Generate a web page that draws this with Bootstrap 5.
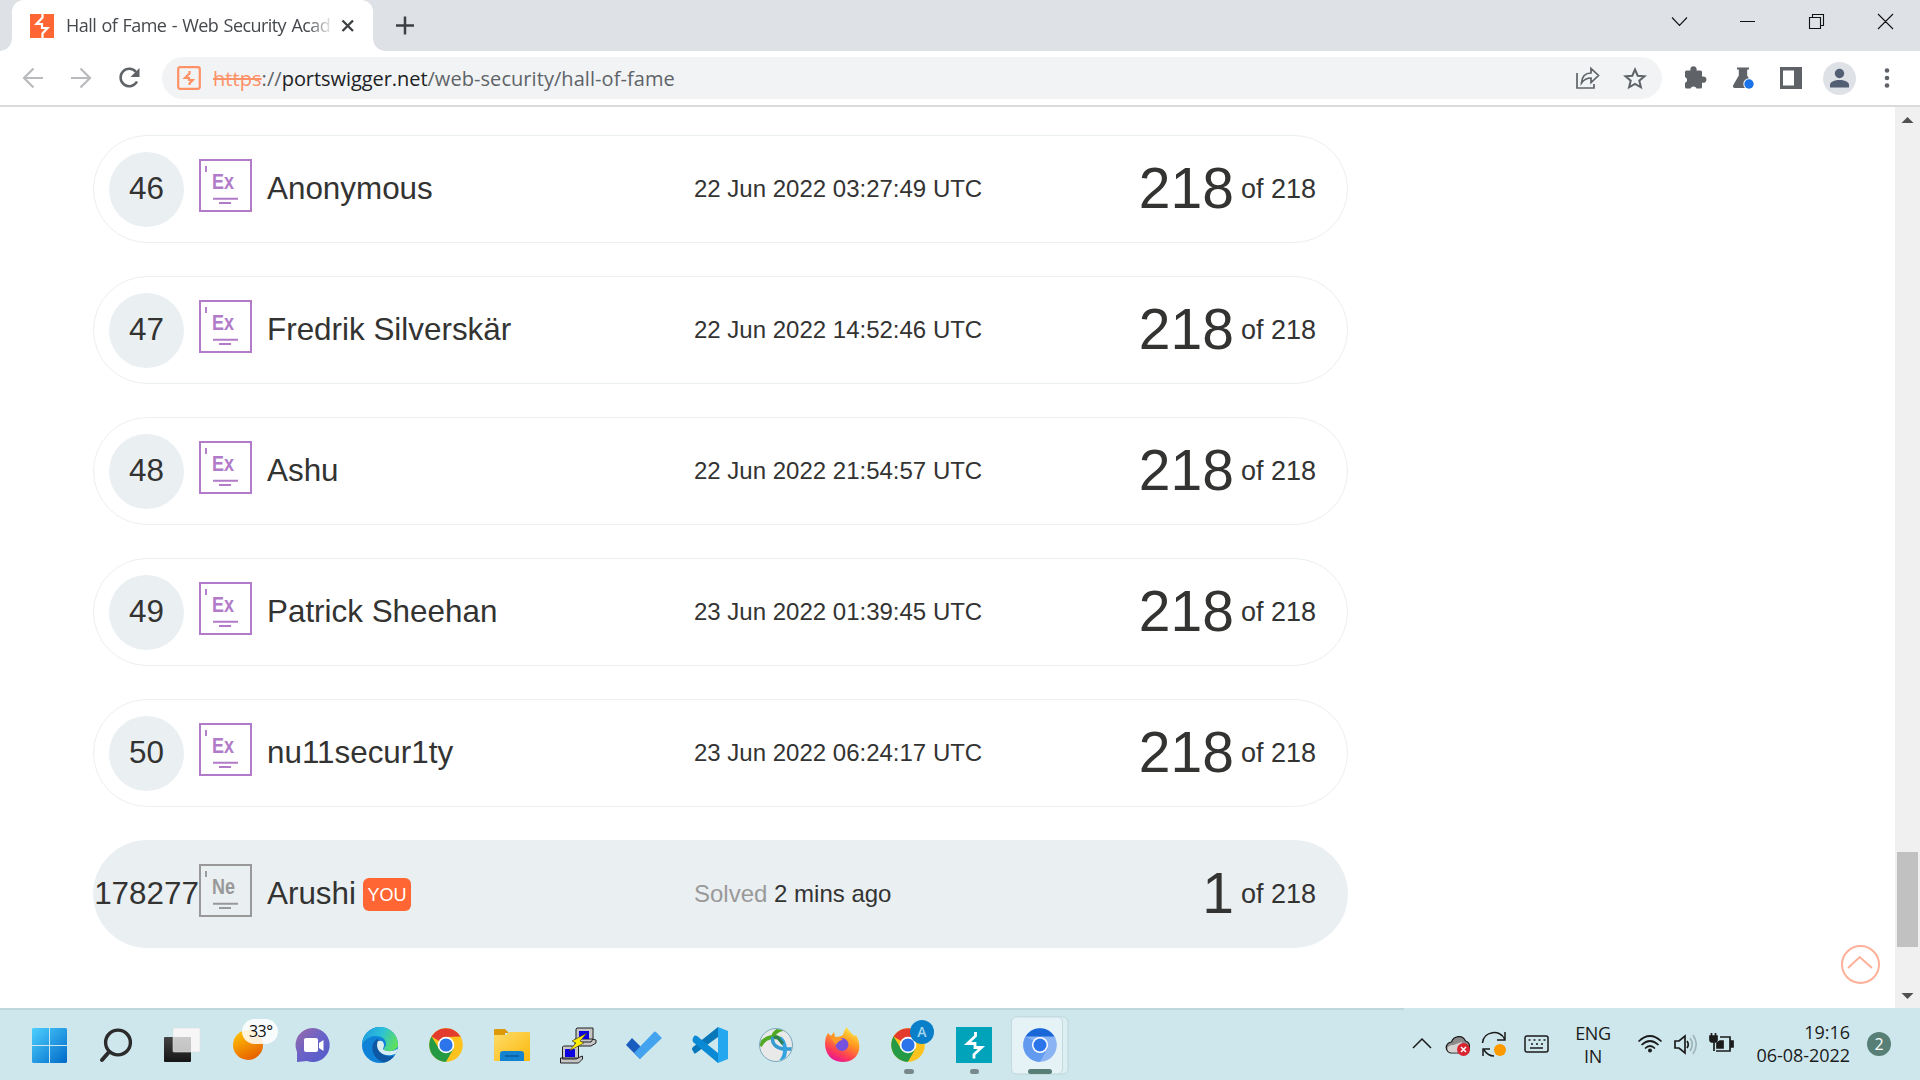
<!DOCTYPE html>
<html lang="en">
<head>
<meta charset="utf-8">
<title>Hall of Fame - Web Security Academy</title>
<link href="https://cdn.jsdelivr.net/npm/bootstrap@5.3.0/dist/css/bootstrap.min.css" rel="stylesheet">
<style>
body{width:1920px;height:1080px;overflow:hidden;background:#fff;font-family:"Liberation Sans",Arial,sans-serif;color:#333332}
svg{display:block;flex:none}
.ui-font{font-family:"Open Sans","Noto Sans",sans-serif}
.tabstrip{height:51px;background:#dee1e6}
.tab-active{width:361px;height:51px;margin-left:12px;background:#fff;border-radius:12px 12px 0 0;padding-left:18px;position:relative}
.tab-active::before,.tab-active::after{content:"";position:absolute;bottom:0;width:12px;height:12px}
.tab-active::before{left:-12px;background:radial-gradient(circle at 0 0,transparent 11.5px,#fff 12px)}
.tab-active::after{right:-12px;background:radial-gradient(circle at 100% 0,transparent 11.5px,#fff 12px)}
.tab-title{width:268px;margin-left:12px;margin-right:6px;font-size:18px;letter-spacing:-.56px;word-spacing:1.2px;color:#45484c;-webkit-mask-image:linear-gradient(90deg,#000 90%,rgba(0,0,0,.1) 99%)}
.toolbar{height:56px;border-bottom:2px solid #d9dadc;padding-left:9px}
.omnibox{width:1500px;height:42px;border-radius:21px;background:#f1f3f4;margin-left:12px;padding-left:15px}
.url{margin-left:12px;padding-top:1px;font-size:20px;letter-spacing:.06px;color:#5f6368}
.url .scheme{color:#ff9166;text-decoration:line-through}
.url .host{color:#202124;letter-spacing:-.06px}
.viewport{height:901px}
.board{width:1255px;margin:28px 0 0 93px;gap:33px}
.entry{height:108px;border:1px solid #eaeff1;border-radius:54px;font-size:31.4px;line-height:1;padding:0 31px 0 15px}
.entry.me{background:#eaeff2}
.rank{width:75px;height:75px;padding-bottom:2px;margin-top:1px;background:#eaeff2}
.level{margin:-7px 15px 0 15px}
.who{width:427px;padding-bottom:1px}
.when{font-size:24px;padding-bottom:1px}
.score{font-size:57px;padding-bottom:2px}
.score small{font-size:27px;margin-left:7px;padding-top:2px}
.you{background:#f63;color:#fff;font-size:18px;width:48px;height:33px;border-radius:6px;margin:2px 0 0 7px}
.scroller{width:25px;background:#f0f0f0}
.thumb{width:21px;height:95px;margin-top:728px;background:#c1c1c1}
.to-top{margin:838px 15px 0 0}
.taskbar{height:72px;background:#cee7ec;padding-left:17px;color:#1b1b1b;position:relative}
.taskbar::before{content:"";position:absolute;left:0;top:0;width:1404px;height:2px;background:#bed7dc}
.lang{width:72px;padding-top:1px;font-size:18px;line-height:23px;letter-spacing:-.4px}
.clock{width:107px;font-size:18px;line-height:23px;letter-spacing:-.05px}
.notif{width:24px;height:24px;background:#577f76;color:#fff;font-size:16px;margin:0 29px 0 17px}
</style>
</head>
<body class="d-flex flex-column">
<svg width="0" height="0" class="position-absolute">
<defs>
<symbol id="exp" viewBox="0 0 53 53"><rect x="1" y="1" width="51" height="51" fill="none" stroke="#b27bc9" stroke-width="2"/><path d="M7 7v6M14 39.7h25M20 44h12" stroke="#b27bc9" stroke-width="1.9"/><text x="13" y="30" font-family="Liberation Sans,sans-serif" font-weight="700" font-size="22" textLength="22" lengthAdjust="spacingAndGlyphs" fill="#b27bc9">Ex</text></symbol>
<symbol id="newb" viewBox="0 0 53 53"><rect x="1" y="1" width="51" height="51" fill="none" stroke="#999" stroke-width="2"/><path d="M7 7v6M14 39.7h25M20 44h12" stroke="#999" stroke-width="1.9"/><text x="13" y="30" font-family="Liberation Sans,sans-serif" font-weight="700" font-size="22" textLength="23" lengthAdjust="spacingAndGlyphs" fill="#999">Ne</text></symbol>
<linearGradient id="gWin" x1="0" y1="0" x2="1" y2="1"><stop stop-color="#4dd0ff"/><stop offset="1" stop-color="#0069c8"/></linearGradient>
<linearGradient id="gDark" x1="0" y1="0" x2="0" y2="1"><stop stop-color="#444"/><stop offset="1" stop-color="#151515"/></linearGradient>
<linearGradient id="gSun" x1=".2" y1="0" x2=".7" y2="1"><stop stop-color="#ffc400"/><stop offset="1" stop-color="#e65c00"/></linearGradient>
<linearGradient id="gChat" x1="0" y1="0" x2="1" y2="1"><stop stop-color="#9c6aa8"/><stop offset=".5" stop-color="#6a62c8"/><stop offset="1" stop-color="#5059c9"/></linearGradient>
<linearGradient id="gEdge" x1="0" y1=".2" x2="1" y2=".5"><stop stop-color="#1f9ade"/><stop offset=".5" stop-color="#2bc0da"/><stop offset="1" stop-color="#5fe05a"/></linearGradient>
<linearGradient id="gFold" x1="0" y1="0" x2="1" y2="1"><stop stop-color="#ffdb6b"/><stop offset="1" stop-color="#f9b90a"/></linearGradient>
<linearGradient id="gFox" x1=".8" y1="0" x2=".3" y2="1"><stop stop-color="#fff04a"/><stop offset=".4" stop-color="#ff9a1f"/><stop offset=".75" stop-color="#ff3e55"/><stop offset="1" stop-color="#e3129a"/></linearGradient>
<clipPath id="cBall"><circle cx="776" cy="1045" r="16"/></clipPath>
<clipPath id="cEdge"><circle cx="380" cy="1045" r="18"/></clipPath>
<symbol id="chrome" viewBox="0 0 34 34"><circle cx="17" cy="17" r="16.8" fill="#fcc31e"/><path d="M17 17 2.5 8.6A16.8 16.8 0 0 1 31.5 8.6L17 9z" fill="#e33b2e"/><path d="M2.5 8.6A16.8 16.8 0 0 0 17 33.8L24.3 21 17 17 10 20.5z" fill="#249a45"/><circle cx="17" cy="17" r="8.3" fill="#fff"/><circle cx="17" cy="17" r="6.6" fill="#2b74ea"/></symbol>
</defs>
</svg>

<header class="ui-font">
<div class="tabstrip d-flex">
<div class="tab-active d-flex align-items-center">
<svg width="24" height="24" viewBox="0 0 24 24"><path fill="#ff6633" d="M0 0h24v24H0z"/><path d="M12.500 0v3.500L6.500 10h5.500v4h5.500l-5 5.500V24" stroke="#fff" stroke-width="2.200" fill="none"/></svg>
<div class="tab-title text-nowrap">Hall of Fame - Web Security Acad</div>
<svg width="16" height="16" viewBox="0 0 16 16"><path d="m2.500 2.500 10.500 10.500M13 2.500 2.500 13" stroke="#3c4043" stroke-width="2.300"/></svg>
</div>
<svg class="ms-2" width="44" height="51" viewBox="-4 0 44 51"><path d="M11 25.500h18M20 16.500v18" stroke="#3c4043" stroke-width="2.500"/></svg>
<svg class="ms-auto" width="276" height="43" viewBox="1644 0 276 43" fill="none" stroke="#111" stroke-width="1.100"><path d="m1672 17.500 7.500 8 7.500-8M1740 21.500h15M1809.500 17.500h11v11h-11zM1812.500 17v-2.500h11v11h-3M1878 14l15 15M1893 14l-15 15"/></svg>
</div>
<div class="toolbar d-flex align-items-center">
<svg width="141" height="54" viewBox="9 51 141 54" fill="none" stroke-width="2.200"><path d="M43 78H24.500M33.500 68.500 24 78l9.500 9.500M71 78h18.500M80.500 68.500 90 78l-9.500 9.500" stroke="#b8babd"/><path d="M136 72A8.700 8.700 0 1 0 137 81.500" stroke="#5f6368" stroke-width="2.500"/><path d="M139.500 68v9h-9z" fill="#5f6368"/></svg>
<div class="omnibox d-flex align-items-center">
<svg width="24" height="24" viewBox="0 0 24 24"><rect x="1.200" y="1.200" width="21.600" height="21.600" rx="2" fill="none" stroke="#ff9166" stroke-width="2.200"/><path d="M12.500 5v2.500L8 12h4v2h3.800l-3.300 3.500V19" fill="none" stroke="#ff9166" stroke-width="2.200"/></svg>
<div class="url text-nowrap"><span class="scheme">https</span>://<span class="host">portswigger.net</span>/web-security/hall-of-fame</div>
<svg class="ms-auto" width="96" height="42" viewBox="1566 57 96 42" fill="none" stroke="#5f6368" stroke-width="1.700"><path d="M1577 73v15h17v-4M1581.500 83c.5-7 4-10 9.500-10v-4.500l7.500 7-7.500 7V78c-4.500 0-7 1.500-9.500 5z"/><path d="m1635 69.500 2.700 6.200 6.800.6-5.200 4.400 1.600 6.600-5.900-3.500-5.900 3.500 1.600-6.600-5.200-4.400 6.800-.6z" stroke-width="2"/></svg>
</div>
<svg width="258" height="54" viewBox="1662 51 258 54" fill="#5f6368"><path d="M1685 72q0-1.500 1.500-1.500h4a3.200 3.200 0 1 1 6 0h4q1.500 0 1.500 1.500v4.500h.500a3.200 3.200 0 1 1 0 6.200h-.5v4.300q0 1.500-1.500 1.500h-4a3.200 3.200 0 0 0-6 0h-4q-1.500 0-1.500-1.500v-4a3.200 3.200 0 0 0 0-6z"/><path d="M1737 67.500h12v2h-1.800v6l5.500 9.500c1 2-.2 3-1.700 3h-16c-2 0-2.500-1.500-1.700-3l5.500-9.500v-6h-1.800z"/><circle cx="1749" cy="84" r="5.700" fill="#fff"/><circle cx="1749" cy="84" r="4.700" fill="#1a73e8"/><path fill-rule="evenodd" d="M1780 67h22v22h-22zm3 3.500v15h11v-15z"/><circle cx="1839.500" cy="78.500" r="16.500" fill="#dee1e6"/><circle cx="1839.500" cy="73.500" r="4.700" fill="#515e74"/><path fill="#515e74" d="M1830 87.500v-2.500c0-3.500 5-5 9.500-5s9.500 1.500 9.500 5v2.500z"/><circle cx="1887" cy="70.500" r="2.300"/><circle cx="1887" cy="78" r="2.300"/><circle cx="1887" cy="85.500" r="2.300"/></svg>
</div>
</header>

<main class="viewport d-flex">
<div class="board d-flex flex-column">
<div class="entry d-flex align-items-center"><div class="rank rounded-circle d-flex align-items-center justify-content-center">46</div><svg class="level" width="53" height="53"><use href="#exp"/></svg><div class="who">Anonymous</div><div class="when">22 Jun 2022 03:27:49 UTC</div><div class="score ms-auto d-flex align-items-center">218<small>of 218</small></div></div>
<div class="entry d-flex align-items-center"><div class="rank rounded-circle d-flex align-items-center justify-content-center">47</div><svg class="level" width="53" height="53"><use href="#exp"/></svg><div class="who">Fredrik Silverskär</div><div class="when">22 Jun 2022 14:52:46 UTC</div><div class="score ms-auto d-flex align-items-center">218<small>of 218</small></div></div>
<div class="entry d-flex align-items-center"><div class="rank rounded-circle d-flex align-items-center justify-content-center">48</div><svg class="level" width="53" height="53"><use href="#exp"/></svg><div class="who">Ashu</div><div class="when">22 Jun 2022 21:54:57 UTC</div><div class="score ms-auto d-flex align-items-center">218<small>of 218</small></div></div>
<div class="entry d-flex align-items-center"><div class="rank rounded-circle d-flex align-items-center justify-content-center">49</div><svg class="level" width="53" height="53"><use href="#exp"/></svg><div class="who">Patrick Sheehan</div><div class="when">23 Jun 2022 01:39:45 UTC</div><div class="score ms-auto d-flex align-items-center">218<small>of 218</small></div></div>
<div class="entry d-flex align-items-center"><div class="rank rounded-circle d-flex align-items-center justify-content-center">50</div><svg class="level" width="53" height="53"><use href="#exp"/></svg><div class="who">nu11secur1ty</div><div class="when">23 Jun 2022 06:24:17 UTC</div><div class="score ms-auto d-flex align-items-center">218<small>of 218</small></div></div>
<div class="entry me d-flex align-items-center"><div class="rank rounded-circle d-flex align-items-center justify-content-center">178277</div><svg class="level" width="53" height="53"><use href="#newb"/></svg><div class="who d-flex align-items-center">Arushi<span class="you d-flex align-items-center justify-content-center">YOU</span></div><div class="when"><span style="color:#999">Solved</span> 2 mins ago</div><div class="score ms-auto d-flex align-items-center">1<small>of 218</small></div></div>
</div>
<svg class="to-top ms-auto" width="39" height="39" viewBox="0 0 39 39" fill="none" stroke="#ffb099" stroke-width="2"><circle cx="19.500" cy="19.500" r="18.500"/><path d="m7 23 11.700-11L31 23"/></svg>
<div class="scroller d-flex flex-column align-items-center">
<svg width="25" height="17"><path d="M6.500 16 12.500 10l6 6z" fill="#505050"/></svg>
<div class="thumb"></div>
<svg width="25" height="61"><path d="M6.500 46h12l-6 6z" fill="#505050"/></svg>
</div>
</main>

<footer class="taskbar ui-font d-flex align-items-center">
<svg width="66" height="72" viewBox="17 1008 66 72"><path fill="url(#gWin)" d="M33 1028h16v17H32v-16zM50 1028h16l1 1v16H50zM32 1046h17v17H33l-1-1zM50 1046h17v16l-1 1H50z"/></svg>
<svg width="66" height="72" viewBox="83 1008 66 72" fill="none" stroke="#2b2b2b"><circle cx="118" cy="1042.500" r="12.400" stroke-width="3.400"/><path d="m109 1052-7 8" stroke-width="4" stroke-linecap="round"/></svg>
<svg width="66" height="72" viewBox="149 1008 66 72"><rect x="164" y="1037" width="27" height="25" rx="1" fill="url(#gDark)"/><rect x="173" y="1028" width="27" height="24" rx="1" fill="#fff" fill-opacity=".72" stroke="#ddd" stroke-width=".6"/><path d="M191 1029h8v22h-8zM174 1029h25v8h-25z" fill="#f6f6f6"/></svg>
<svg width="66" height="72" viewBox="215 1008 66 72"><circle cx="248" cy="1045" r="15" fill="url(#gSun)"/><rect x="242" y="1019" width="36" height="25" rx="12.500" fill="#fff" fill-opacity=".85"/><text x="249" y="1037" font-family="Open Sans,sans-serif" font-size="16" textLength="24" fill="#111">33°</text></svg>
<svg width="66" height="72" viewBox="281 1008 66 72"><path d="M313 1028a17 17 0 1 1-6 33l-10 1v-10a17 17 0 0 1 16-24z" fill="url(#gChat)"/><rect x="304" y="1038" width="14" height="14" rx="2" fill="#fff"/><path d="m319 1043 4.500-3v11l-4.500-3z" fill="#fff"/></svg>
<svg width="66" height="72" viewBox="347 1008 66 72"><g clip-path="url(#cEdge)"><path d="M362 1027h36v36h-36z" fill="#0f82d8"/><path d="M362 1044c4-5 8-8 13-8 8 0 11 4 11 8 0 3-3 4-2 6 2 3 14 2 15-7v-17h-37z" fill="url(#gEdge)"/><path d="M377 1039c-8 5-6 20 8 24h14v-9c-8 5-18 2-20-5-1-3 0-6 2-8z" fill="#0d57a3"/><path d="M378 1041c3-1 6 0 6 4 0 2-1 3-1 4 2 3 10 3 14 0h4v4l-6 1c-10 4-18-2-18-9q0-2 1-4z" fill="#d8edf1"/></g></svg>
<svg width="66" height="72" viewBox="413 1008 66 72"><use href="#chrome" x="429" y="1028" width="34" height="34"/></svg>
<svg width="66" height="72" viewBox="479 1008 66 72"><path d="M494 1030q0-1 1-1h10l4 4h-4v4h-11z" fill="#dc9a08"/><path d="M494 1035h12l4-3h19q1 0 1 1v28h-36z" fill="url(#gFold)"/><path d="M500 1061v-7q0-3 3-3h18q3 0 3 3v7z" fill="#1483cf"/><path d="M505 1056h14" stroke="#0b5a9c" stroke-width="1.500"/></svg>
<svg width="66" height="72" viewBox="545 1008 66 72"><g fill="#c6c6c6" stroke="#222" stroke-width="1"><path d="M575 1039h17l4 1v3l-5 3h-16zM577 1028h16v11l-2 3h-15v-13z"/><path d="M560.500 1058h17l5-2v3l-4 4h-18zM563.500 1046h15v12l-2 1h-14v-12z"/></g><path d="M579 1031h10v8h-10zM565 1049h10v8h-10z" fill="#0c00e0"/><path d="m587 1033-15 8 4 2-7 8 15-8-4-2z" fill="#fe0" stroke="#333" stroke-width=".6"/></svg>
<svg width="66" height="72" viewBox="611 1008 66 72"><path d="m626 1045 6-7 14 14-6 7z" fill="#1a5cbd"/><path d="m634 1053 20-21q1-1 2 0l6 6-21 20q-1 1-2 0z" fill="#43a3ef"/></svg>
<svg width="66" height="72" viewBox="677 1008 66 72"><path d="m693 1047 25-20v10l-22 16q-1 1-2 0l-1-2q-2-2 0-4z" fill="#0876b9"/><path d="m693 1038 1-2q1-1 3 0l21 17v10l-25-21q-1-2 0-4z" fill="#0a8ad4"/><path d="m718 1027 10 4v28l-10 4z" fill="#25a7f0"/></svg>
<svg width="66" height="72" viewBox="743 1008 66 72"><g clip-path="url(#cBall)"><circle cx="776" cy="1045" r="16" fill="#e8e9e8"/><g fill="none" stroke-width="4"><path d="M760 1046c3-6 8-9 14-9 4 0 7 2 9 5M783 1029c-6 1-9 4-10 8" stroke="#50aa23"/><path d="M773 1037c-2 6 3 11 10 12h10" stroke="#359bd0" stroke-width="3.500"/><path d="M780 1038q5 4 5 12c0 4-1 8-4 11" stroke="#35a3df"/><path d="M774 1038q3-2 5 1l4 5" stroke="#2c8158" stroke-width="3"/></g></g><circle cx="776" cy="1045" r="16.500" fill="none" stroke="#7fa9bd"/></svg>
<svg width="66" height="72" viewBox="809 1008 66 72"><path d="M826 1037l2-4 3 3 3-4 1 5c4 0 6-1 8-2 1-4 2-6 4-8 1 4 5 6 7 9l2-1c8 14 1 27-13 27-16 0-20-15-17-25z" fill="url(#gFox)"/><circle cx="842" cy="1044.500" r="6.500" fill="#7650df"/><path d="M830 1037c5-1 12 1 13 3-3 0-6 2-7 5z" fill="#ff9b26"/></svg>
<svg width="66" height="72" viewBox="875 1008 66 72"><use href="#chrome" x="891" y="1028" width="34" height="34"/><circle cx="922" cy="1032" r="12" fill="#087fc8"/><text x="922" y="1037" text-anchor="middle" font-family="Open Sans,sans-serif" font-size="14" font-weight="600" fill="#a5d5ee">A</text><rect x="904" y="1069" width="10" height="5" rx="2.500" fill="#78898c"/></svg>
<svg width="66" height="72" viewBox="941 1008 66 72"><path fill="#00a3ba" d="M956 1027h36v36h-36z"/><path d="M975.500 1032v4l-8 7.500h7.500v4h6.500l-7.500 7v4" fill="none" stroke="#fff" stroke-width="2.800"/><rect x="970" y="1069" width="9" height="5" rx="2.500" fill="#78898c"/></svg>
<svg width="66" height="72" viewBox="1007 1008 66 72"><rect x="1012" y="1017" width="56" height="57" rx="5" fill="#dceff3" stroke="#bdd5da"/><rect x="1011.500" y="1017" width="51" height="57" rx="5" fill="#e5f2f6" stroke="#c3d9dd"/><circle cx="1040" cy="1045" r="16.800" fill="#8ab4f4"/><path d="M1025.500 1036.600a16.800 16.800 0 0 1 29 0H1040z" fill="#1967d6"/><path d="M1025.500 1036.600a16.800 16.800 0 0 0 14.500 25.200l8-14-8-4z" fill="#629af0"/><circle cx="1040" cy="1045" r="8" fill="#fff"/><circle cx="1040" cy="1045" r="6.500" fill="#2b74ea"/><rect x="1028" y="1069" width="24" height="5" rx="2.500" fill="#577f76"/></svg>
<svg class="ms-auto" width="157" height="72" viewBox="1400 1008 157 72" fill="none" stroke="#1b1b1b" stroke-width="1.500"><path d="m1413 1048 9-9 9 9"/><path d="M1452 1053a5.500 5.500 0 0 1-.5-11c2-6 11-8 14-1 5 1 5 8 2 12z" fill="#8a8a8a" stroke-width="1.200"/><path d="M1447.500 1049c0-3 3-4 6-4l8-3 5 10.500h-15c-2 0-4-1-4-3.500z" fill="#d6d2d2" stroke="none"/><circle cx="1463.500" cy="1049.500" r="6.500" fill="#d9232e" stroke="none"/><path d="m1461 1047 5 5m0-5-5 5" stroke="#fff"/><path d="M1482.500 1043c1-12 18-14 22-4M1505 1032v8h-8M1494 1056c-5 0-8-3-10-6M1483 1056v-7h7"/><circle cx="1500" cy="1050" r="6" fill="#f90" stroke="none"/><rect x="1525" y="1036" width="23" height="16" rx="2"/><path d="M1528.500 1040h17" stroke-dasharray="2 3"/><path d="M1531 1044h12" stroke-dasharray="2 3"/><path d="M1530 1048h13"/></svg>
<div class="lang text-center">ENG<br>IN</div>
<svg width="114" height="72" viewBox="1629 1008 114 72" fill="none" stroke="#1b1b1b" stroke-width="1.700"><path d="M1638.500 1041.500q11.500-11 23 0M1641.500 1045q8.500-8 17 0M1645 1048.500q5-5 10 0"/><circle cx="1650" cy="1050.500" r="2" fill="#1b1b1b" stroke="none"/><path d="M1675 1041h4l6-5v17l-6-5h-4zM1687 1041q2.500 3.500 0 7"/><path d="M1690 1038q4.500 6 0 13M1693 1035q6.500 9 0 19" stroke="#9fb4b8"/><path d="M1720 1037h10v14h-14"/><path d="M1731 1041h2v6h-2zM1717 1048v-5l3-2h3v7z" fill="#1b1b1b"/><path d="M1710 1036h7v4q0 2-3.500 2t-3.500-2zM1711.500 1033v3M1715.500 1033v3M1714 1042v9" fill="#1b1b1b"/></svg>
<div class="clock text-end">19:16<br>06-08-2022</div>
<div class="notif rounded-circle d-flex align-items-center justify-content-center">2</div>
</footer>
<script src="https://cdn.jsdelivr.net/npm/bootstrap@5.3.0/dist/js/bootstrap.bundle.min.js"></script>
</body>
</html>
